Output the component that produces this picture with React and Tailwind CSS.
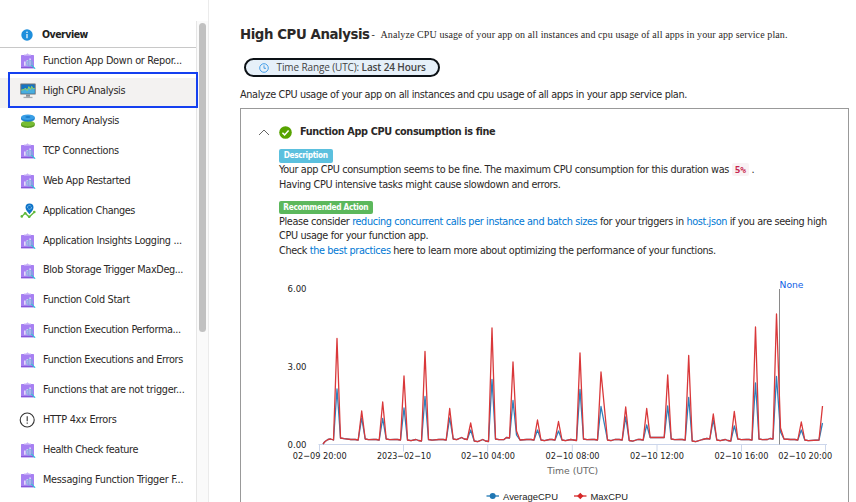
const tahoma = "font-['DejaVu_Sans_Condensed','DejaVu_Sans',sans-serif] [font-stretch:condensed]";

function ReportIcon() {
  return (
    <svg width="16" height="18" viewBox="0 0 16 18">
      <rect x="1" y="3" width="13" height="13.3" rx="0.6" fill="#a780f2" />
      <path d="M1 14.9h13v.8a.6.6 0 0 1-.6.6H1.6a.6.6 0 0 1-.6-.6z" fill="#8557d8" />
      <path d="M4 3.8V2.6h2L7.5 1.3 9 2.6h2v1.2z" fill="#c9b3f7" />
      <path d="M4 9.6h1.7v4.2H4zM6.6 7.9h1.7v5.9H6.6zM9.2 6.6h1.7v7.2H9.2z" fill="#e3d9fb" />
      <circle cx="9.6" cy="11.2" r="3" fill="#83a5dd" fillOpacity="0.6" stroke="#76b4dc" strokeWidth="0.7" />
      <path d="M11.8 13.4l3 3" stroke="#32c5d4" strokeWidth="1.2" strokeLinecap="round" />
    </svg>
  );
}

function MonitorIcon() {
  return (
    <svg width="16" height="18" viewBox="0 0 16 18">
      <rect x="0.3" y="1.5" width="15.4" height="11" rx="0.6" fill="#6e7277" />
      <rect x="1.3" y="2.5" width="13.4" height="8.9" fill="#1574c4" />
      <path d="M1.3 8l2.9-.4 1.2-1.6 1.7 2.6 1.8-4 1.5 3 1.3-3.2 1.2 2.3 1.8-.3v5H1.3z" fill="#48aede" />
      <path d="M1.3 8l2.9-.4 1.2-1.6 1.7 2.6 1.8-4 1.5 3 1.3-3.2 1.2 2.3 1.8-.3" fill="none" stroke="#a5d84f" strokeWidth="0.9" />
      <path d="M6 12.5h4v2.3H6z" fill="#8b9096" />
      <path d="M3.5 14.8h9v1.3h-9z" fill="#a5a9ad" />
    </svg>
  );
}

function MemoryIcon() {
  return (
    <svg width="16" height="18" viewBox="0 0 16 18">
      <path d="M1 11.6v1.4c0 1.700 3 2.900 6.900 2.900s6.900-1.200 6.900-2.900v-1.400z" fill="#5a9a22" />
      <ellipse cx="7.9" cy="11.600" rx="6.9" ry="2.8" fill="#78bd33" />
      <path d="M1 5.200v1.600c0 1.700 3 2.900 6.900 2.900s6.900-1.200 6.900-2.900V5.200z" fill="#1c80ce" />
      <ellipse cx="7.9" cy="5.2" rx="6.9" ry="2.8" fill="#3a9fe6" />
      <ellipse cx="7.9" cy="5" rx="2.6" ry="0.9" fill="#1c7dcb" />
    </svg>
  );
}

function ChangesIcon() {
  return (
    <svg width="16" height="18" viewBox="0 0 16 18">
      <path d="M1.6 14.6L5.2 11.2l4 3.8 5.200-5" fill="none" stroke="#5fb83a" strokeWidth="1.3" />
      <circle cx="1.8" cy="14.4" r="1.3" fill="#5fb83a" />
      <circle cx="5.2" cy="11.2" r="1.3" fill="#5fb83a" />
      <circle cx="9.2" cy="14.8" r="1.3" fill="#5fb83a" />
      <circle cx="14.3" cy="10" r="1.3" fill="#5fb83a" />
      <path d="M9.5 12.2C7.8 9.8 5.500 8 5.500 5.400a4 4 0 0 1 8 0c0 2.600-2.300 4.400-4 6.800z" fill="#0f74c8" />
      <path d="M7.5 5.900a2 2 0 0 1 3.300-1.900M11.500 4.900a2 2 0 0 1-3.300 1.900" fill="none" stroke="#8cc4ee" strokeWidth="0.8" />
    </svg>
  );
}

function ErrorIcon() {
  return (
    <svg width="16" height="18" viewBox="0 0 16 18" className="overflow-visible">
      <circle cx="7.2" cy="9" r="7" fill="none" stroke="#333" strokeWidth="1.1" />
      <path d="M7.2 5.2v5M7.2 11.500v1.300" stroke="#333" strokeWidth="1.1" />
    </svg>
  );
}

function InfoIcon() {
  return (
    <svg width="12" height="12" viewBox="0 0 12 12">
      <circle cx="6" cy="6" r="5.7" fill="#1f8fdc" />
      <path d="M6 5v4.200" stroke="#fff" strokeWidth="1.2" />
      <circle cx="6" cy="3.2" r="0.8" fill="#fff" />
    </svg>
  );
}

const items = [
  ["Function App Down or Repor...", ReportIcon, "tracking-[-0.27px]"],
  ["High CPU Analysis", MonitorIcon, "tracking-[-0.36px]"],
  ["Memory Analysis", MemoryIcon, "tracking-[-0.45px]"],
  ["TCP Connections", ReportIcon, "tracking-[-0.36px]"],
  ["Web App Restarted", ReportIcon, "tracking-[-0.35px]"],
  ["Application Changes", ChangesIcon, "tracking-[-0.4px]"],
  ["Application Insights Logging ...", ReportIcon, "tracking-[-0.33px]"],
  ["Blob Storage Trigger MaxDeg...", ReportIcon, "tracking-[-0.37px]"],
  ["Function Cold Start", ReportIcon, "tracking-[-0.32px]"],
  ["Function Execution Performa...", ReportIcon, "tracking-[-0.35px]"],
  ["Function Executions and Errors", ReportIcon, "tracking-[-0.34px]"],
  ["Functions that are not trigger...", ReportIcon, "tracking-[-0.29px]"],
  ["HTTP 4xx Errors", ErrorIcon, "tracking-[-0.25px]"],
  ["Health Check feature", ReportIcon, "tracking-[-0.4px]"],
  ["Messaging Function Trigger F...", ReportIcon, "tracking-[-0.27px]"],
];

function Sidebar() {
  return (
    <aside className="relative flex w-[209px] shrink-0 border-r border-[#ebebeb] pt-[21px]">
      <div className="flex min-w-0 flex-1 flex-col">
        <div className="flex h-[27px] shrink-0 items-center gap-[9px] border-b border-[#c8c8c8] pl-[21px] pt-[2px] text-[10.5px] font-bold tracking-[-0.5px] text-[#222]">
          <InfoIcon />
          <span>Overview</span>
        </div>
        {items.map(([label, Icon, track], i) => (
          <div
            key={label}
            className={`flex h-[29.94px] shrink-0 items-center gap-[7px] whitespace-nowrap pb-[4px] pl-5 text-[10.8px] text-[#2b2827] ${track} ${i === 1 ? "bg-[#f3f2f1]" : ""}`}
          >
            <Icon />
            <span>{label}</span>
          </div>
        ))}
      </div>
      <div className="w-[12px] shrink-0 border-l border-[#e6e6e6] bg-[#fafafa] pt-[2px]">
        <div className="ml-[2px] h-[309px] w-[7px] rounded-full bg-[#c1c1c1]" />
      </div>
      <div className="absolute left-[8px] top-[72px] h-[36px] w-[190px] border-2 border-[#1440f0]" />
    </aside>
  );
}

// Each spike: x position, top of the maximum line, top of the average line.
const spikes = [
  [337, 338.5, 389], [361.7, 411, 418], [382.7, 402, 418.5], [404, 376, 408], [425, 351.5, 396.5],
  [449.7, 408.5, 418], [470.7, 423, 430], [492, 328, 379.5], [513, 362, 400.5], [537.5, 420, 430],
  [558.5, 421.5, 431], [580, 353, 389.5], [601, 372, 406.5], [625.7, 407, 417], [646.7, 408.5, 425],
  [667.7, 375, 406], [688.7, 355.5, 397.5], [713.3, 414, 420], [734.3, 411.5, 426], [755.5, 327, 383],
  [776.5, 314, 376.5], [801.3, 422, 430],
];

// Resting levels just before and just after each spike.
const rests = [
  [440, 438], [440, 439], [440, 439], [440, 440], [441, 439.5], [440, 439], [439.5, 441], [441.5, 439],
  [438, 438], [440, 440], [440, 440], [440.5, 439], [440, 440], [440, 440.5], [440, 437.5], [437.5, 439],
  [440, 441], [439, 440], [441, 439], [440, 439], [439, 436], [440, 440],
];

function linePath(col, end) {
  const pts = [[323, 444], [325, 441.5], [328, 439.5], [330.5, 439]];
  spikes.forEach((s, i) => {
    const [before, after] = rests[i];
    // The spike at index 12 falls back over a longer span.
    const right = i === 12 ? 6.5 : 3.5;
    pts.push([s[0] - 3.5, before], [s[0], s[col]]);
    if (i === 8) pts.push([s[0] + 3.5, col === 1 ? 431 : 435], [s[0] + 7, 440]);
    else if (i === 20) pts.push([s[0] + 4, col === 1 ? 428 : 432], [s[0] + 7.5, 439]);
    else {
      pts.push([s[0] + right, after]);
      pts.push([s[0] + right + 3.5, after + (i === 14 ? 0 : 0.7)]);
    }
    const next = spikes[i + 1];
    if (next && i !== 14) {
      const mid = (s[0] + next[0]) / 2 + 1.5;
      pts.push([mid, 439.5 - (i === 5 ? 2 : 0)]);
      pts.push([next[0] - 6.5, rests[i + 1][0] - 0.5]);
    }
  });
  pts.push([819, 440], [822.5, end]);
  return "M" + pts.map((p) => p.join(" ")).join("L");
}

const ticks = [
  [319.5, "02-09 20:00", 319.7], [403.5, "2023-02-10", 404], [487.7, "02-10 04:00", 488],
  [572.3, "02-10 08:00", 572.6], [657, "02-10 12:00", 657], [741.5, "02-10 16:00", 741.5], [825.5, "02-10 20:00", 805.2],
];

function Chart() {
  return (
    <svg width="606" height="230" viewBox="241 272 606 230" className="block font-['DejaVu_Sans','Liberation_Sans',sans-serif] text-[9.5px] [font-stretch:normal]">
      <g fill="#222">
        <text x="287.5" y="292.3" textLength="19" lengthAdjust="spacingAndGlyphs">6.00</text>
        <text x="287.5" y="370.3" textLength="19" lengthAdjust="spacingAndGlyphs">3.00</text>
        <text x="287.5" y="448.2" textLength="19" lengthAdjust="spacingAndGlyphs">0.00</text>
      </g>
      <path d="M318.5 444.5H827" stroke="#ccd6eb" />
      {ticks.map(([x, label, c]) => (
        <g key={label}>
          <path d={`M${x} 444.5v7`} stroke="#ccd6eb" />
          <text x={c - 27} y="459.3" textLength="54" lengthAdjust="spacingAndGlyphs" fill="#222">{label.replaceAll("-", "−")}</text>
        </g>
      ))}
      <path d="M779.5 289v155.500" stroke="#8a8a8a" />
      <path d={linePath(2, 423)} fill="none" stroke="#2f80ba" strokeWidth="1.3" strokeLinejoin="round" />
      <path d={linePath(1, 406)} fill="none" stroke="#d9383a" strokeWidth="1.3" strokeLinejoin="round" />
      <text x="779.5" y="288" textLength="24" lengthAdjust="spacingAndGlyphs" fill="#0f62e6">None</text>
      <text x="547.2" y="474" textLength="51" lengthAdjust="spacingAndGlyphs" fill="#666">Time (UTC)</text>
      <path d="M486.5 496h12.500" stroke="#1f77b4" strokeWidth="1.3" />
      <circle cx="492.7" cy="496" r="3" fill="#1f77b4" />
      <path d="M574 496h12.500" stroke="#d62728" strokeWidth="1.3" />
      <path d="M580.3 492.8l3.200 3.200-3.200 3.200-3.200-3.200z" fill="#d62728" />
      <g fill="#222" className="font-['Liberation_Sans',sans-serif] text-[9.7px]">
        <text x="503" y="499.5" textLength="55" lengthAdjust="spacingAndGlyphs">AverageCPU</text>
        <text x="590.5" y="499.5" textLength="37.5" lengthAdjust="spacingAndGlyphs">MaxCPU</text>
      </g>
    </svg>
  );
}

export default function App() {
  return (
    <div className={`flex h-[502px] w-[856px] overflow-hidden bg-white text-[#2b2827] ${tahoma}`}>
      <Sidebar />
      <main className="flex min-w-0 flex-1 flex-col whitespace-nowrap pl-[31px] pr-[7px] pt-[24px]">
        <div className="flex h-[20px] shrink-0 items-center">
          <h1 className="w-[131.5px] text-[14.8px] font-bold tracking-[-0.42px]">High CPU Analysis</h1>
          <p className="font-['Liberation_Serif',serif] text-[10px] tracking-[0.095px]">
            <span className="inline-block w-[9px]">-</span>Analyze CPU usage of your app on all instances and cpu usage of all apps in your app service plan.
          </p>
        </div>
        <div className="ml-[4px] mt-[14px] flex h-[19px] w-[196px] shrink-0 items-center rounded-full border-2 border-[#0c1116] bg-[#e6f0f9] pl-[12.5px] font-['Open_Sans',sans-serif] text-[10px] tracking-[-0.12px] text-[#444] [font-stretch:normal]">
          <svg width="10" height="10" viewBox="0 0 10 10" className="mr-[8px]">
            <circle cx="5" cy="5" r="4.3" fill="none" stroke="#3595e5" strokeWidth="0.9" />
            <path d="M5 2.4V5.300H7" fill="none" stroke="#3595e5" strokeWidth="0.9" />
          </svg>
          <span>Time Range (UTC): <b className="font-semibold">Last 24 Hours</b></span>
        </div>
        <p className="mt-[10px] h-[15px] shrink-0 text-[10.8px] leading-[16px] tracking-[-0.36px]">Analyze CPU usage of your app on all instances and cpu usage of all apps in your app service plan.</p>
        <section className="mt-[6px] flex flex-1 flex-col border border-b-0 border-[#999] pt-[13px]">
          <div className="flex h-[20px] items-center pl-[17px]">
            <svg width="12" height="8" viewBox="0 0 12 8"><path d="M1 7l5-5 5 5" fill="none" stroke="#555" strokeWidth="0.9" /></svg>
            <svg width="13" height="13" viewBox="0 0 13 13" className="ml-[9px]">
              <circle cx="6.5" cy="6.5" r="6.3" fill="#57a300" />
              <path d="M3.4 6.7l2.200 2.200 4-4.400" fill="none" stroke="#fff" strokeWidth="1.5" />
            </svg>
            <h2 className="ml-[8px] text-[10.8px] font-bold tracking-[-0.37px]">Function App CPU consumption is fine</h2>
          </div>
          <div className="flex flex-col items-start pl-[38px] pt-[7px] text-[10.8px] leading-[14.7px] tracking-[-0.36px]">
            <span className="flex h-[13.5px] w-[53.5px] items-center justify-center rounded-[2px] bg-[#5bc0de] text-[8.2px] font-bold tracking-[-0.35px] text-white">Description</span>
            <p className="pb-[0.5px]">Your app CPU consumption seems to be fine. The maximum CPU consumption for this duration was <code className="rounded-[2px] bg-[#f9f2f4] px-[3px] py-[1px] font-['DejaVu_Sans_Mono',monospace] text-[9.5px] font-bold tracking-[-0.2px] text-[#c7254e]">5%</code> .</p>
            <p>Having CPU intensive tasks might cause slowdown and errors.</p>
            <span className="mt-[8.5px] flex h-[13.5px] w-[93.5px] items-center justify-center rounded-[2px] bg-[#5cb85c] text-[8.2px] font-bold tracking-[-0.3px] text-white">Recommended Action</span>
            <p className="pt-[0.3px] tracking-[-0.37px]">Please consider <a className="text-[#0078d4]">reducing concurrent calls per instance and batch sizes</a> for your triggers in <a className="text-[#0078d4]">host.json</a> if you are seeing high</p>
            <p>CPU usage for your function app.</p>
            <p className="tracking-[-0.37px]">Check <a className="text-[#0078d4]">the best practices</a> here to learn more about optimizing the performance of your functions.</p>
          </div>
          <div className="mt-auto h-[230px]">
            <Chart />
          </div>
        </section>
      </main>
    </div>
  );
}
